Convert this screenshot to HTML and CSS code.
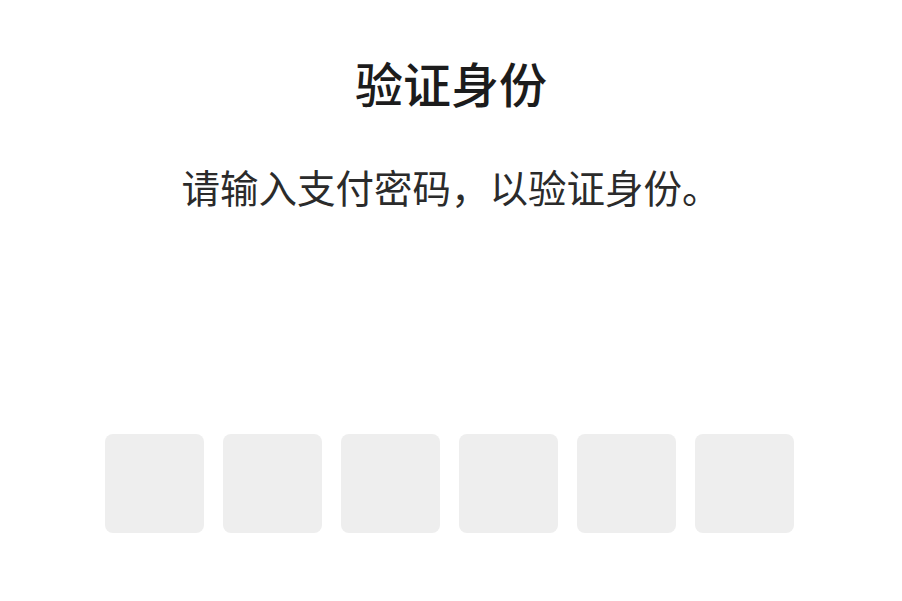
FILE: index.html
```html
<!DOCTYPE html>
<html lang="zh-CN">
<head>
<meta charset="utf-8">
<title>验证身份</title>
<link rel="stylesheet" href="styles.css">
</head>
<body>
<main class="page">
  <h1 class="title">验证身份</h1>
  <p class="subtitle">请输入支付密码，以验证身份。</p>
  <div class="pin">
    <div class="cell"></div>
    <div class="cell"></div>
    <div class="cell"></div>
    <div class="cell"></div>
    <div class="cell"></div>
    <div class="cell"></div>
  </div>
</main>
</body>
</html>
```

FILE: styles.css
```css
html, body {
  margin: 0;
  padding: 0;
  background: #ffffff;
}
body {
  font-family: "Noto Sans CJK SC", "Noto Sans", sans-serif;
  width: 902px;
  height: 601px;
  overflow: hidden;
}
.page {
  display: flex;
  flex-direction: column;
  align-items: center;
  padding-top: 58px;
}
.title {
  margin: 0;
  font-size: 48px;
  line-height: 48px;
  font-weight: 500;
  color: #1c1c1c;
  text-align: center;
}
.subtitle {
  margin: 61px 0 0;
  font-size: 38.5px;
  line-height: 38px;
  font-weight: 400;
  color: #2b2b2b;
  text-align: center;
}
.pin {
  margin: 229px 4px 0 0;
  display: flex;
  gap: 19px;
}
.cell {
  width: 99px;
  height: 99px;
  border-radius: 8px;
  background: #eeeeee;
}
```
